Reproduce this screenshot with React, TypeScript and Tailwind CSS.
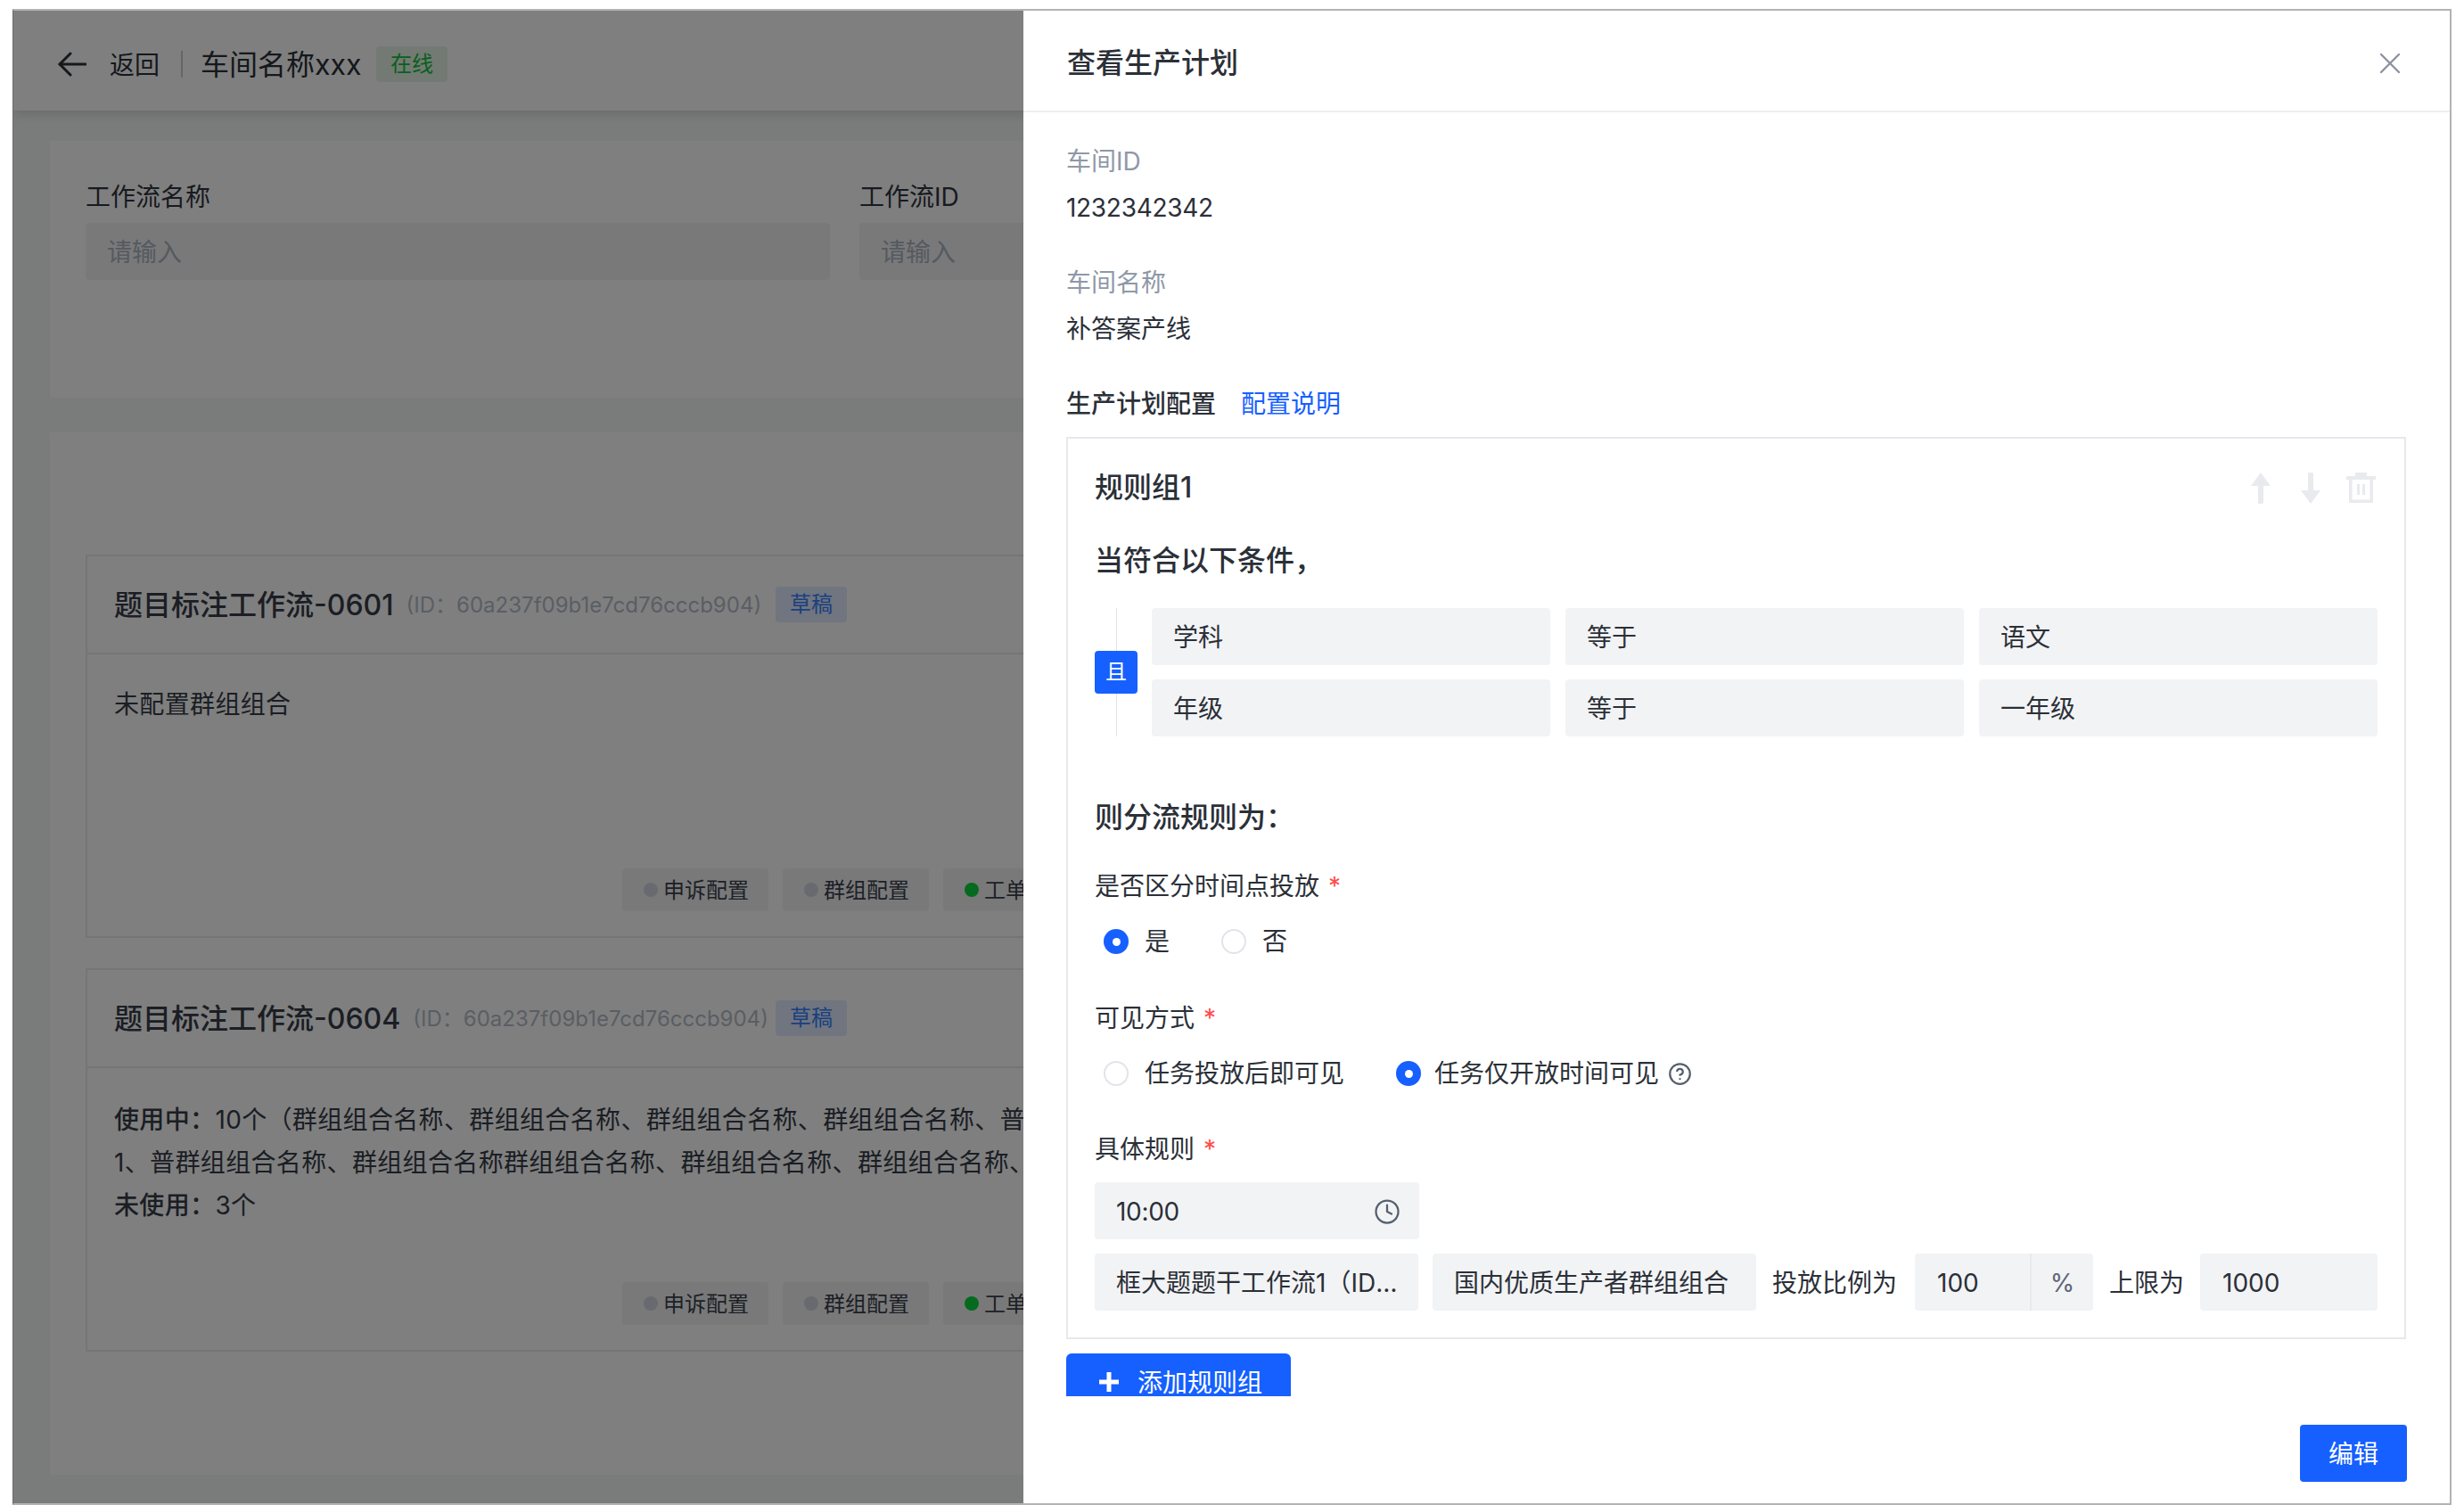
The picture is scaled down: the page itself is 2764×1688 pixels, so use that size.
import { CircleHelp, Clock } from "lucide-react";

const Dot = ({ on }: { on?: boolean }) => (
  <span className={on ? "w-[16px] h-[16px] rounded-full bg-[#0ad43c]" : "w-[16px] h-[16px] rounded-full bg-[#d0d4de]"} />
);

const Chip = ({ label, on }: { label: string; on?: boolean }) => (
  <div className="w-[164px] h-[48px] shrink-0 rounded-[4px] bg-[#f2f3f5] pl-[24px] flex items-center gap-[6px] text-[24px] text-[#3a404c]">
    <Dot on={on} />
    <span className="pt-[2px]">{label}</span>
  </div>
);

const Chips = () => (
  <div className="ml-[570px] flex gap-[16px]">
    <Chip label="申诉配置" />
    <Chip label="群组配置" />
    <Chip label="工单配置" on />
  </div>
);

const CardHead = ({ title, id }: { title: string; id: string }) => (
  <div className="h-[110px] pl-[30px] border-b-2 border-[#eaebee] flex items-center">
    <div className="w-[742px] pt-[2px] flex items-center shrink-0">
      <span className="text-[32px] font-medium text-[#363c48] whitespace-nowrap">{title}</span>
      <span className="ml-[14px] text-[24px] text-[#b4bcc8] whitespace-nowrap">(ID：{id})</span>
    </div>
    <span className="w-[80px] h-[40px] rounded-[4px] bg-[#e0ebff] text-[#3480ff] text-[24px] flex items-center justify-center">草稿</span>
  </div>
);

const PageBehind = () => (
  <div className="h-full bg-[#f5f8f7] font-['Inter','Noto_Sans_CJK_SC',sans-serif]">
    <header className="relative h-[112px] bg-white pl-[50px] pt-[8px] flex items-center shadow-[0_4px_12px_rgba(0,0,0,0.14)]">
      <svg width="32" height="28" viewBox="0 0 32 28" fill="none" stroke="#2b3038" strokeWidth="3" strokeLinecap="round" strokeLinejoin="round">
        <path d="M2 14H31" />
        <path d="M14 2L2 14L14 26" />
      </svg>
      <span className="ml-[26px] pt-[2px] text-[28px] text-[#2b3038]">返回</span>
      <span className="ml-[24px] w-[2px] h-[30px] bg-[#c9ccd2]" />
      <span className="ml-[20px] pt-[2px] w-[197px] text-[32px] text-[#2b3038] whitespace-nowrap">车间名称xxx</span>
      <span className="w-[80px] h-[40px] rounded-[4px] bg-[#e6f5e9] text-[#10c038] text-[24px] flex items-center justify-center">在线</span>
    </header>

    <section className="ml-[41px] mt-[34px] h-[288px] bg-white px-[40px] pt-[43px] flex gap-[33px]">
      {["工作流名称", "工作流ID"].map((label) => (
        <div key={label} className="w-[835px] shrink-0">
          <div className="h-[40px] leading-[40px] text-[28px] text-[#2f3540]">{label}</div>
          <div className="mt-[9px] h-[64px] rounded-[4px] bg-[#f2f3f5] px-[24px] pt-[2px] flex items-center text-[28px] text-[#aab4c0]">请输入</div>
        </div>
      ))}
    </section>

    <section className="ml-[41px] mt-[39px] h-[1169px] bg-white pl-[40px] pt-[137px]">
      <div className="h-[430px] border-2 border-[#eaebee] flex flex-col">
        <CardHead title="题目标注工作流-0601" id="60a237f09b1e7cd76cccb904" />
        <div className="flex-1 pl-[30px] pt-[36px] pb-[28px] flex flex-col justify-between">
          <div className="h-[40px] leading-[40px] text-[28px] tracking-[0.35px] text-[#363c48]">未配置群组组合</div>
          <Chips />
        </div>
      </div>
      <div className="mt-[34px] h-[430px] border-2 border-[#eaebee] flex flex-col">
        <CardHead title="题目标注工作流-0604" id="60a237f09b1e7cd76cccb904" />
        <div className="flex-1 pl-[30px] pt-[34px] pb-[28px] flex flex-col justify-between">
          <div className="text-[28px] leading-[48px] tracking-[0.35px] text-[#363c48] whitespace-nowrap">
            <div><span className="font-medium">使用中：</span>10个（群组组合名称、群组组合名称、群组组合名称、群组组合名称、普群组组合名称</div>
            <div>1、普群组组合名称、群组组合名称群组组合名称、群组组合名称、群组组合名称、群组组合名称</div>
            <div><span className="font-medium">未使用：</span>3个</div>
          </div>
          <Chips />
        </div>
      </div>
    </section>
  </div>
);

const Field = ({ children, className }: { children: React.ReactNode; className: string }) => (
  <div className={`h-[64px] rounded-[4px] bg-[#f2f3f5] pl-[24px] pr-[14px] pt-[2px] flex items-center text-[28px] text-[#2b3038] ${className}`}>{children}</div>
);

const Radio = ({ on }: { on?: boolean }) =>
  on ? (
    <span className="w-[28px] h-[28px] rounded-full bg-[#1660ff] flex items-center justify-center">
      <span className="w-[9px] h-[9px] rounded-full bg-white" />
    </span>
  ) : (
    <span className="w-[28px] h-[28px] rounded-full border-2 border-[#e2e4e9] bg-white" />
  );

const Option = ({ label, on, gap = "gap-[18px]" }: { label: string; on?: boolean; gap?: string }) => (
  <div className={`flex items-center ${gap}`}>
    <Radio on={on} />
    <span className="text-[28px] text-[#2b3038]">{label}</span>
  </div>
);

const FormLabel = ({ children, className }: { children: React.ReactNode; className: string }) => (
  <div className={`h-[40px] leading-[40px] text-[28px] text-[#2b3038] ${className}`}>
    {children}
    <span className="ml-[10px] text-[#ff4d4f]">*</span>
  </div>
);

const Drawer = () => (
  <aside className="absolute top-0 right-0 bottom-0 w-[1600px] bg-white flex flex-col font-['Inter','Noto_Sans_CJK_SC',sans-serif] text-[#2b3038]">
    <div className="h-[114px] shrink-0 border-b-2 border-[#eceef2] pt-[5px] pl-[49px] pr-[55px] flex items-center justify-between">
      <span className="text-[32px] font-medium">查看生产计划</span>
      <svg width="24" height="24" viewBox="0 0 24 24" fill="none" stroke="#8b93a0" strokeWidth="2.4" strokeLinecap="round">
        <path d="M2 2L22 22M22 2L2 22" />
      </svg>
    </div>

    <div className="h-[1440px] shrink-0 overflow-hidden pl-[48px] pr-[49px] pt-[35px]">
      <div className="text-[28px] leading-[40px] text-[#8f98a8]">车间ID</div>
      <div className="mt-[12px] text-[28px] leading-[40px] tracking-[-0.3px]">1232342342</div>
      <div className="mt-[44px] text-[28px] leading-[40px] text-[#8f98a8]">车间名称</div>
      <div className="mt-[12px] text-[28px] leading-[40px]">补答案产线</div>
      <div className="mt-[44px] text-[28px] leading-[40px] flex gap-[28px]">
        <span className="font-medium">生产计划配置</span>
        <span className="text-[#1660ff]">配置说明</span>
      </div>

      <div className="mt-[17px] border-2 border-[#e6e8ec] px-[30px] pt-[33px] pb-[30px]">
        <div className="h-[44px] flex items-center justify-between">
          <span className="text-[32px] font-medium">规则组1</span>
          <div className="flex items-center mr-[2px]">
            <svg width="22" height="35" viewBox="0 0 22 35" fill="#e8eaee">
              <path d="M11 0L22 15H14V33.5A1.5 1.5 0 0 1 12.5 35H9.5A1.5 1.5 0 0 1 8 33.5V15H0Z" />
            </svg>
            <svg className="ml-[34px]" width="22" height="35" viewBox="0 0 22 35" fill="#e8eaee">
              <path d="M11 35L22 20H14V1.5A1.5 1.5 0 0 0 12.5 0H9.5A1.5 1.5 0 0 0 8 1.5V20H0Z" />
            </svg>
            <svg className="ml-[29px]" width="33" height="34" viewBox="0 0 33 34" fill="#e8eaee">
              <path d="M10 0H23V4H33V8H30V34H3V8H0V4H10ZM6.5 8V30.5H26.5V8Z" fillRule="evenodd" />
              <rect x="12" y="13" width="3" height="12" />
              <rect x="18" y="13" width="3" height="12" />
            </svg>
          </div>
        </div>

        <div className="mt-[38px] h-[44px] leading-[44px] text-[32px] font-medium">当符合以下条件，</div>

        <div className="mt-[31px] flex gap-[16px]">
          <div className="relative w-[48px] shrink-0 flex items-center justify-center">
            <span className="absolute top-0 bottom-0 left-[24px] w-[1px] bg-[#e2e4e9]" />
            <span className="relative w-[48px] h-[48px] rounded-[4px] bg-[#1660ff] text-white text-[24px] flex items-center justify-center">且</span>
          </div>
          <div className="grid grid-cols-[447px_447px_447px] gap-x-[17px] gap-y-[16px]">
            {["学科", "等于", "语文", "年级", "等于", "一年级"].map((v, i) => (
              <Field key={i} className="">{v}</Field>
            ))}
          </div>
        </div>

        <div className="mt-[69px] h-[44px] leading-[44px] text-[32px] font-medium">则分流规则为：</div>

        <FormLabel className="mt-[35px]">是否区分时间点投放</FormLabel>
        <div className="mt-[22px] h-[40px] pl-[10px] flex items-center gap-[58px]">
          <Option label="是" on />
          <Option label="否" />
        </div>

        <FormLabel className="mt-[46px]">可见方式</FormLabel>
        <div className="mt-[22px] h-[40px] pl-[10px] flex items-center gap-[58px]">
          <Option label="任务投放后即可见" />
          <div className="flex items-center">
            <Option label="任务仅开放时间可见" on gap="gap-[15px]" />
            <CircleHelp className="ml-[10px]" size={27} strokeWidth={2} color="#55606f" />
          </div>
        </div>

        <FormLabel className="mt-[45px]">具体规则</FormLabel>
        <Field className="mt-[17px] w-[364px] justify-between !pr-[21px]">
          <span className="tracking-[-0.3px]">10:00</span>
          <Clock size={30} strokeWidth={1.8} color="#55606f" />
        </Field>
        <div className="mt-[16px] flex items-center text-[28px]">
          <Field className="w-[363px] shrink-0">
            <span className="truncate">框大题题干工作流1（ID：60a237f09b1e7cd76cccb904）</span>
          </Field>
          <Field className="ml-[16px] w-[363px] shrink-0">国内优质生产者群组组合</Field>
          <span className="ml-[18px] pt-[2px] w-[140px] shrink-0">投放比例为</span>
          <div className="ml-[20px] w-[200px] h-[64px] shrink-0 rounded-[4px] bg-[#f2f3f5] flex items-center">
            <span className="w-[131px] h-full pl-[25px] pt-[2px] border-r-2 border-[#e8eaee] flex items-center">100</span>
            <span className="flex-1 pt-[2px] text-center text-[#5d6675]">%</span>
          </div>
          <span className="ml-[18px] pt-[2px] w-[84px] shrink-0">上限为</span>
          <Field className="ml-[18px] w-[199px] shrink-0 !pl-[25px]">1000</Field>
        </div>
      </div>

      <button className="mt-[16px] w-[252px] h-[64px] rounded-t-[6px] bg-[#1660ff] pl-[37px] flex items-center gap-[21px] text-[28px] text-white">
        <svg width="22" height="22" viewBox="0 0 22 22" stroke="#fff" strokeWidth="5">
          <path d="M11 0V22M0 11H22" />
        </svg>
        <span className="pt-[2px]">添加规则组</span>
      </button>
    </div>

    <div className="flex-1 pr-[48px] pt-[32px] flex justify-end items-start">
      <button className="w-[120px] h-[64px] rounded-[4px] bg-[#1660ff] pt-[2px] text-white text-[28px]">编辑</button>
    </div>
  </aside>
);

const App = () => (
  <div className="w-[2764px] h-[1688px] bg-white pl-[14px] pt-[10px] overflow-hidden">
    <div className="relative w-[2736px] h-[1678px] overflow-hidden border-t-2 border-r-2 border-b-2 border-l border-t-[#b3b3b3] border-r-[#b3b3b3] border-b-[#b3b3b3] border-l-[#6b6b6b]">
      <PageBehind />
      <div className="absolute inset-0 bg-black/50" />
      <Drawer />
    </div>
  </div>
);

export default App;
